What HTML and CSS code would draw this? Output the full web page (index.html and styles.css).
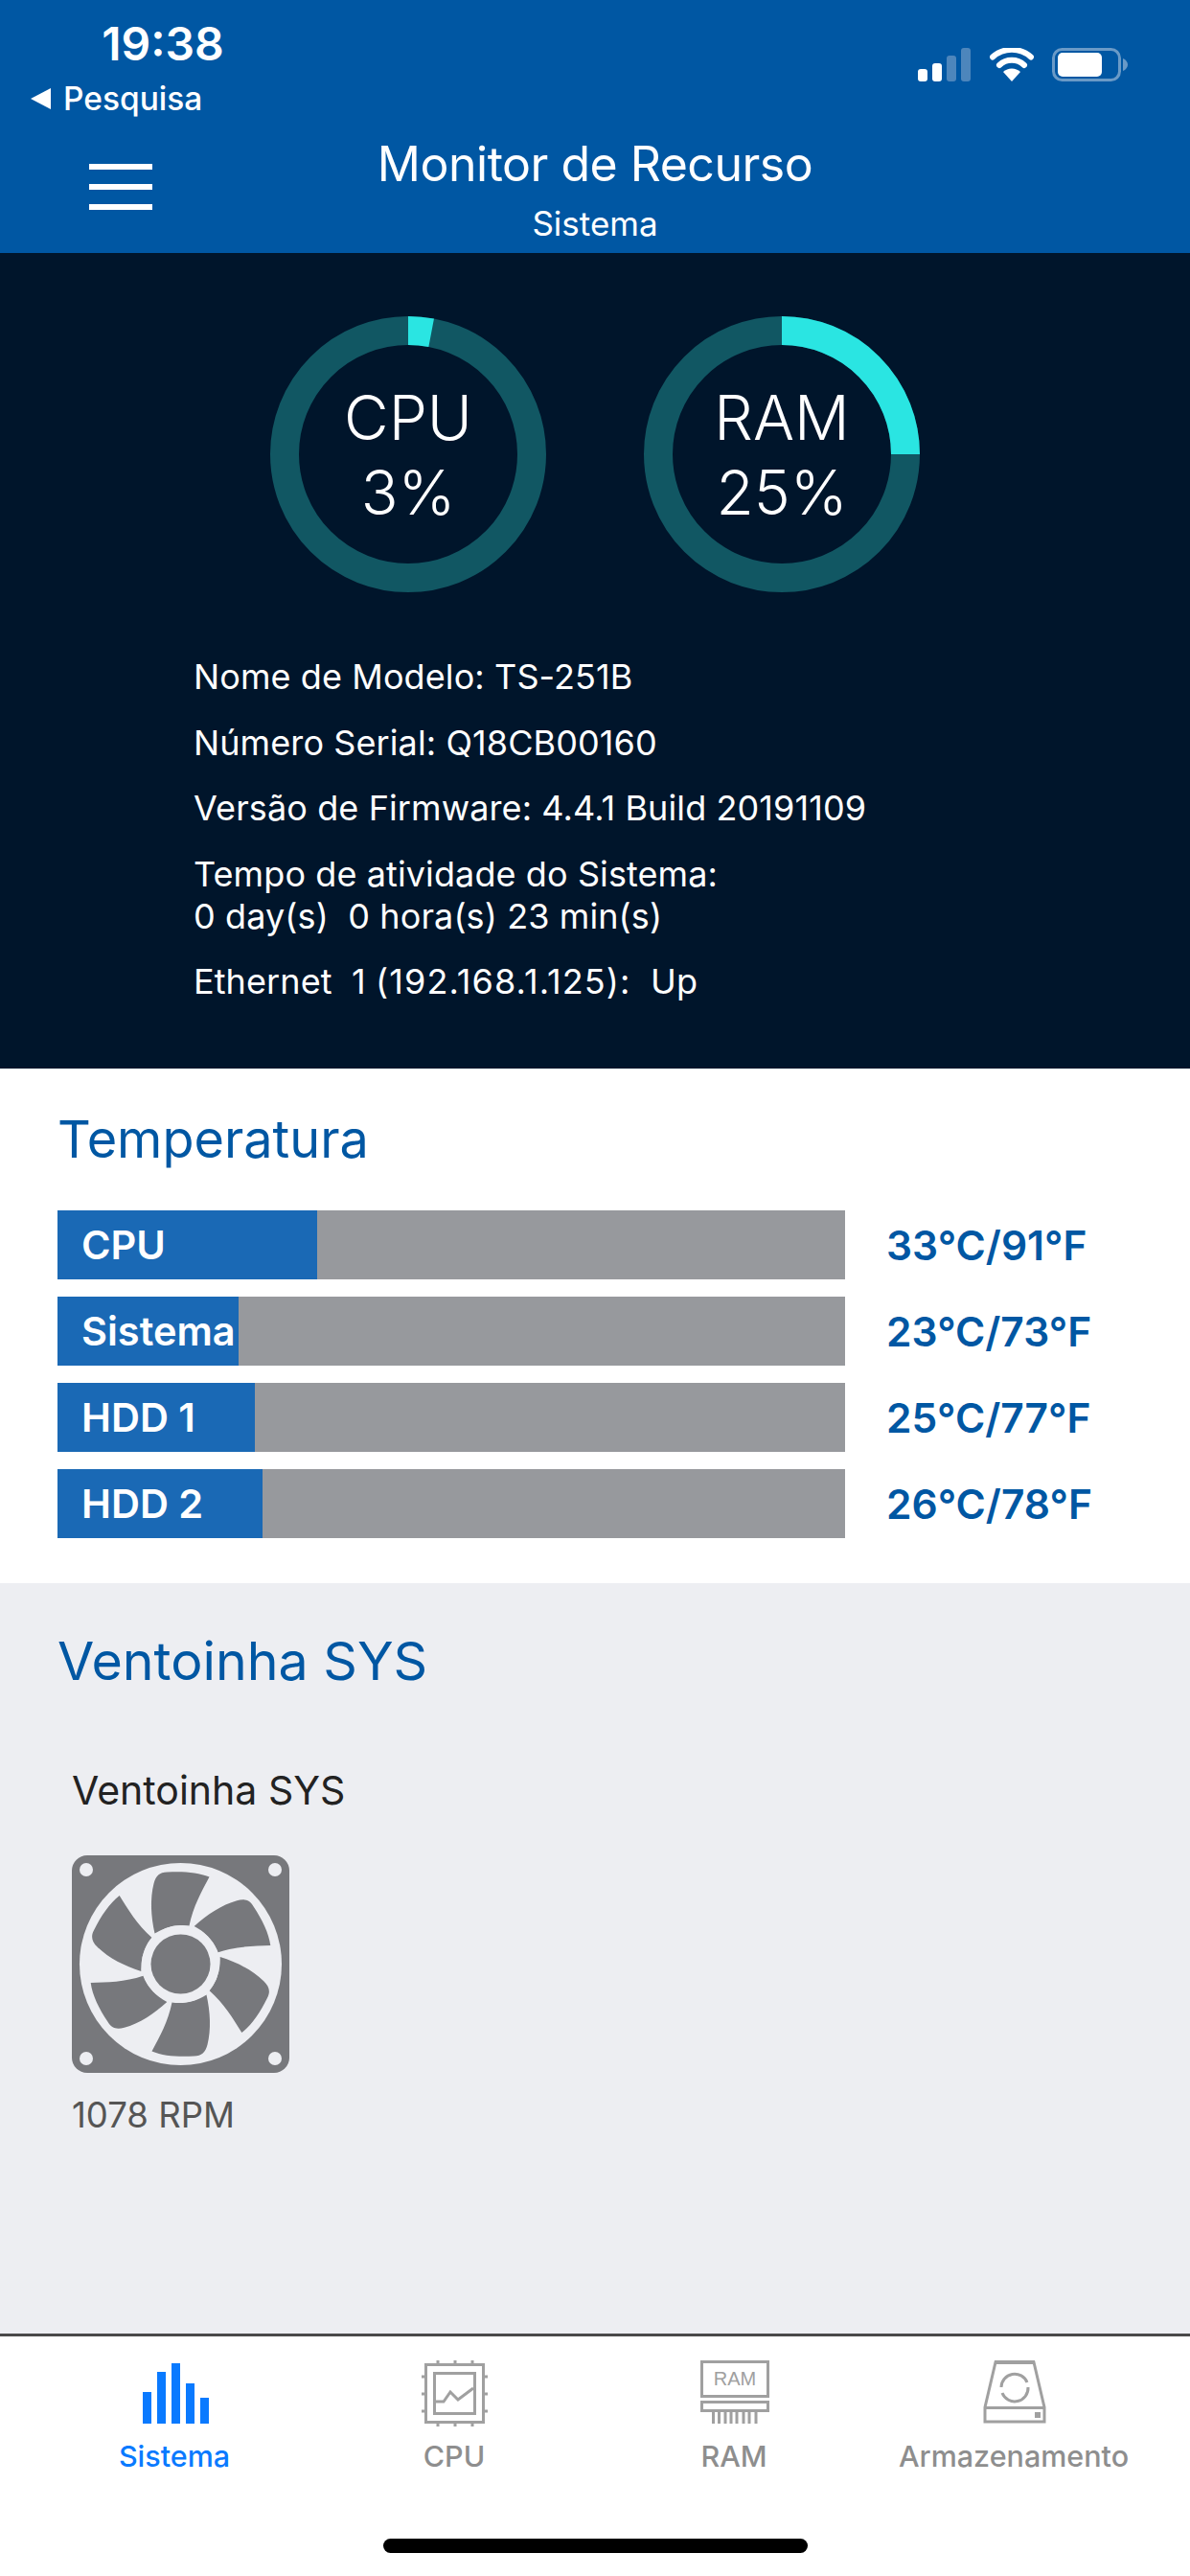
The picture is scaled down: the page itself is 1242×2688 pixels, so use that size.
FILE: index.html
```html
<!DOCTYPE html>
<html lang="pt">
<head>
  <meta charset="UTF-8" />
  <meta name="viewport" content="width=device-width, initial-scale=1.0"/>
  <title>Monitor de Recurso</title>
  <link rel="stylesheet" href="styles.css">
</head>
<body>

<header id="top-bar">
  <div class="status-row">
    <div class="status-left">
      <div class="clock">19:38</div>
      <div class="back-link"><span class="back-arrow"></span>Pesquisa</div>
    </div>
    <div class="status-icons">
      <svg width="55" height="35" viewBox="0 0 55 35">
        <rect x="0" y="22" width="10" height="13" rx="3" fill="#fff"/>
        <rect x="15" y="16" width="10" height="19" rx="3" fill="#fff"/>
        <rect x="30" y="8" width="10" height="27" rx="3" fill="#4d86bc"/>
        <rect x="45" y="0" width="10" height="35" rx="3" fill="#4d86bc"/>
      </svg>
      <svg width="46" height="35" viewBox="0 0 46 35">
        <path d="M23 35 L14 25 A13 13 0 0 1 32 25 Z" fill="#fff"/>
        <path d="M10 18 A19 19 0 0 1 36 18" fill="none" stroke="#fff" stroke-width="6" stroke-linecap="round"/>
        <path d="M3 9.500 A30 30 0 0 1 43 9.500" fill="none" stroke="#fff" stroke-width="6" stroke-linecap="round"/>
      </svg>
      <svg width="79" height="35" viewBox="0 0 79 35">
        <rect x="1.500" y="1.500" width="69" height="32" rx="9" fill="none" stroke="#6a9ac7" stroke-width="3"/>
        <rect x="6" y="5" width="46" height="25" rx="5" fill="#fff"/>
        <path d="M74 11 C77 12 79 15 79 17.500 C79 20 77 23 74 24 Z" fill="#6a9ac7"/>
      </svg>
    </div>
  </div>
  <div class="title-row">
    <div class="menu-icon"><span></span><span></span><span></span></div>
    <h1>Monitor de Recurso</h1>
    <p>Sistema</p>
  </div>
</header>

<section id="overview">
  <div class="rings">
    <div class="ring">
      <svg width="288" height="288" viewBox="0 0 288 288">
        <circle class="ring-track" cx="144" cy="144" r="129"/>
        <circle class="ring-value" cx="144" cy="144" r="129" pathLength="100" stroke-dasharray="3 97" transform="rotate(-90 144 144)"/>
      </svg>
      <div class="ring-label">CPU<br>3%</div>
    </div>
    <div class="ring">
      <svg width="288" height="288" viewBox="0 0 288 288">
        <circle class="ring-track" cx="144" cy="144" r="129"/>
        <circle class="ring-value" cx="144" cy="144" r="129" pathLength="100" stroke-dasharray="25 75" transform="rotate(-90 144 144)"/>
      </svg>
      <div class="ring-label">RAM<br>25%</div>
    </div>
  </div>
  <div class="info-list">
    <p>Nome de Modelo: TS-251B</p>
    <p>Número Serial: Q18CB00160</p>
    <p>Versão de Firmware: 4.4.1 Build 20191109</p>
    <p>Tempo de atividade do Sistema:<br>0 day(s)&nbsp; 0 hora(s) 23 min(s)</p>
    <p>Ethernet&nbsp; 1 <span class="ip-text">(192.168.1.125):</span>&nbsp; Up</p>
  </div>
</section>

<section id="temperature">
  <h2>Temperatura</h2>
  <div class="temp-row">
    <div class="temp-bar"><div class="temp-fill" style="width: 33%">CPU</div></div>
    <div class="temp-value">33°C/91°F</div>
  </div>
  <div class="temp-row">
    <div class="temp-bar"><div class="temp-fill" style="width: 23%">Sistema</div></div>
    <div class="temp-value">23°C/73°F</div>
  </div>
  <div class="temp-row">
    <div class="temp-bar"><div class="temp-fill" style="width: 25%">HDD 1</div></div>
    <div class="temp-value">25°C/77°F</div>
  </div>
  <div class="temp-row">
    <div class="temp-bar"><div class="temp-fill" style="width: 26%">HDD 2</div></div>
    <div class="temp-value">26°C/78°F</div>
  </div>
</section>

<section id="fan">
  <h2>Ventoinha SYS</h2>
  <div class="fan-name">Ventoinha SYS</div>
  <svg class="fan-icon" width="227" height="227" viewBox="0 0 227 227">
    <defs>
      <path id="blade" d="M-27 -32 C-31 -50 -32 -68 -28 -84 C-26 -92 -22 -96 -14 -96 C2 -97 18 -96 30 -91 C22 -76 13 -60 9 -40 C-3 -42 -16 -39 -27 -32 Z"/>
    </defs>
    <rect width="227" height="227" rx="16" fill="#77787c"/>
    <circle cx="15" cy="15" r="7" fill="#edeef2"/>
    <circle cx="212" cy="15" r="7" fill="#edeef2"/>
    <circle cx="15" cy="212" r="7" fill="#edeef2"/>
    <circle cx="212" cy="212" r="7" fill="#edeef2"/>
    <circle cx="113.500" cy="113.500" r="105.500" fill="#edeef2"/>
    <g transform="translate(113.500 113.500)" fill="#77787c">
      <use href="#blade"/>
      <use href="#blade" transform="rotate(60)"/>
      <use href="#blade" transform="rotate(120)"/>
      <use href="#blade" transform="rotate(180)"/>
      <use href="#blade" transform="rotate(240)"/>
      <use href="#blade" transform="rotate(300)"/>
      <circle r="40.500" fill="#edeef2"/>
      <circle r="31" fill="#77787c"/>
    </g>
  </svg>
  <div class="fan-speed">1078 RPM</div>
</section>

<nav id="tabs">
  <div class="tab active">
    <svg width="70" height="66" viewBox="-1 0 70 66">
      <rect x="0" y="33" width="9" height="33"/>
      <rect x="15" y="12" width="9" height="54"/>
      <rect x="30" y="3" width="9" height="63"/>
      <rect x="45" y="24" width="9" height="42"/>
      <rect x="60" y="39" width="9" height="27"/>
    </svg>
    <span>Sistema</span>
  </div>
  <div class="tab">
    <svg width="70" height="66" viewBox="0 0 70 66">
      <rect class="line" x="4.500" y="4.500" width="60" height="60"/>
      <rect class="line" x="13.500" y="13.500" width="42" height="42"/>
      <path class="line" d="M15 43 H23 L30 33 L38 41 L54 29" stroke-width="4"/>
      <path class="line" d="M17 0 V3 M35 0 V3 M53 0 V3 M17 66 V69 M35 66 V69 M53 66 V69 M0 17 H3 M0 35 H3 M0 53 H3 M66 17 H69 M66 35 H69 M66 53 H69" stroke-width="2.500"/>
    </svg>
    <span>CPU</span>
  </div>
  <div class="tab">
    <svg width="72" height="66" viewBox="0 0 72 66">
      <rect class="line" x="1.500" y="1.500" width="69" height="36"/>
      <text x="36" y="26" text-anchor="middle" class="ram-text">RAM</text>
      <rect class="line" x="1.500" y="43.500" width="69" height="9"/>
      <path class="line" d="M13.500 54 V66 M19.500 54 V66 M26 54 V66 M32 54 V66 M38 54 V66 M45 54 V66 M51 54 V66 M58 54 V66" stroke-width="3"/>
    </svg>
    <span>RAM</span>
  </div>
  <div class="tab">
    <svg width="66" height="66" viewBox="0 0 66 66">
      <path class="line" d="M13 2 H53 L64 49 V64 H2 V49 Z"/>
      <rect class="solid" x="12" y="0" width="42" height="4"/>
      <path class="line" d="M2 49.500 H64"/>
      <rect class="solid" x="54" y="54" width="6" height="6"/>
      <path class="line" d="M19 28 A14 14 0 0 1 46 23" stroke-width="2.500"/>
      <path class="line" d="M47 28 A14 14 0 0 1 20 34" stroke-width="2.500"/>
    </svg>
    <span>Armazenamento</span>
  </div>
</nav>

<div id="home-row"><div class="home-bar"></div></div>

</body>
</html>
```

FILE: styles.css
```css
* {
  box-sizing: border-box;
}

body {
  font-family: Inter, "Liberation Sans", sans-serif;
  margin: 0;
  width: 1242px;
  height: 2688px;
  display: flex;
  flex-direction: column;
  background: white;
}

h1, h2, p {
  margin: 0;
  font-weight: normal;
}

/* Header */
#top-bar {
  height: 264px;
  background-color: #0057a3;
  color: white;
}

.status-row {
  height: 132px;
  display: flex;
  justify-content: space-between;
}

.status-left {
  padding: 20px 0 0 32px;
}

.clock {
  width: 276px;
  text-align: center;
  font-size: 48px;
  line-height: 52px;
  font-weight: 600;
}

.back-link {
  display: flex;
  align-items: center;
  font-size: 33.500px;
  line-height: 50px;
  font-weight: 500;
  margin-top: 6px;
}

.back-arrow {
  width: 0;
  height: 0;
  border-top: 11px solid transparent;
  border-bottom: 11px solid transparent;
  border-right: 21px solid white;
  margin-right: 13px;
}

.status-icons {
  display: flex;
  align-items: flex-start;
  gap: 19.500px;
  padding: 50px 65px 0 0;
}

.title-row {
  position: relative;
  text-align: center;
}

.title-row h1 {
  font-size: 50px;
  line-height: 78px;
  letter-spacing: -0.5px;
}

.title-row p {
  font-size: 35px;
  line-height: 46px;
}

.menu-icon {
  position: absolute;
  left: 93px;
  top: 39px;
  width: 66px;
  display: flex;
  flex-direction: column;
  gap: 15px;
}

.menu-icon span {
  height: 6px;
  background: white;
}

/* Dark overview */
#overview {
  height: 851px;
  background-color: #00152b;
  color: white;
  padding-top: 66px;
}

.rings {
  display: flex;
  justify-content: center;
  gap: 102px;
}

.ring {
  position: relative;
  width: 288px;
  height: 288px;
}

.ring-track, .ring-value {
  fill: none;
  stroke-width: 30;
}

.ring-track {
  stroke: #115763;
}

.ring-value {
  stroke: #2ae5e2;
}

.ring-label {
  position: absolute;
  top: 2px;
  left: 0;
  right: 0;
  bottom: 0;
  display: flex;
  align-items: center;
  justify-content: center;
  text-align: center;
  font-size: 64px;
  line-height: 78px;
  font-weight: 300;
}

.info-list {
  padding: 66px 0 0 202px;
  font-size: 36px;
  line-height: 44px;
  letter-spacing: 0.1px;
}

.info-list p {
  margin-bottom: 24.500px;
}

.ip-text {
  letter-spacing: 1.1px;
}

/* Temperature */
#temperature {
  height: 537px;
  padding: 46px 0 0 60px;
}

h2 {
  font-size: 55.500px;
  line-height: 56px;
  color: #0057a3;
}

#temperature h2 {
  font-size: 54px;
  margin-bottom: 46px;
}

.temp-row {
  display: flex;
  align-items: center;
  margin-bottom: 18px;
}

.temp-bar {
  width: 822px;
  height: 72px;
  background-color: #97999d;
}

.temp-fill {
  height: 100%;
  background-color: #1a69b5;
  color: white;
  font-size: 41.500px;
  font-weight: 600;
  line-height: 72px;
  padding-left: 25px;
  white-space: nowrap;
}

.temp-value {
  margin-left: 43px;
  font-size: 42.500px;
  font-weight: 600;
  color: #0057a3;
}

/* Fan */
#fan {
  height: 783px;
  background-color: #edeef2;
  padding: 53px 0 0 60px;
}

.fan-name {
  margin: 83px 0 44px 15px;
  font-size: 41px;
  line-height: 48px;
  color: #222;
}

.fan-icon {
  display: block;
  margin-left: 15px;
}

.fan-speed {
  margin: 22px 0 0 15px;
  font-size: 36.500px;
  line-height: 44px;
  color: #555;
}

/* Tab bar */
#tabs {
  height: 207px;
  border-top: 3px solid #4a4a4a;
  padding: 25px 37px 0;
  display: flex;
  align-items: flex-start;
}

.tab {
  flex: 1;
  height: 120px;
  display: flex;
  flex-direction: column;
  align-items: center;
  color: #8e8e8e;
  font-size: 30.500px;
  font-weight: 500;
}

.tab svg {
  overflow: visible;
  margin-bottom: 16px;
}

.tab span {
  line-height: 36px;
  margin-right: 2px;
}

.tab.active {
  color: #0a7aff;
}

.tab.active rect {
  fill: #0a7aff;
}

.line {
  fill: none;
  stroke: #a0a0a0;
  stroke-width: 3;
}

.solid {
  fill: #a0a0a0;
}

.ram-text {
  font-family: "Liberation Sans", sans-serif;
  font-size: 20px;
  fill: #a0a0a0;
}

#home-row {
  flex: 1;
  display: flex;
  justify-content: center;
  padding-top: 7px;
}

.home-bar {
  width: 443px;
  height: 15px;
  border-radius: 8px;
  background: black;
}
```
